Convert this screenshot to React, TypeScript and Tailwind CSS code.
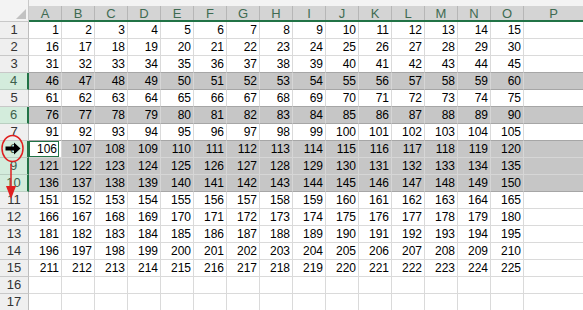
import React from 'react';

const COLS = 'ABCDEFGHIJKLMNO'.split('');
const ROWS = Array.from({ length: 17 }, (_, i) => i + 1);
const selected = new Set([4, 6, 8, 9, 10]);

const isSel = (r: number) => selected.has(r);

const Row = ({ r }: { r: number }) => {
  const sel = isSel(r);
  // dark line under a row when the selection block starts or ends there
  const darkBottom = (sel && !isSel(r + 1)) || (!sel && isSel(r + 1));
  const rowLine = darkBottom ? 'border-b-[#a6a6a6]' : sel ? 'border-b-[#d6d6d6]' : 'border-b-[#dadada]';
  const hasData = r <= 15;

  return (
    <div className="flex h-[17px]">
      <div
        className={`w-[29px] shrink-0 flex items-center justify-center border-b text-[13px] ${
          sel
            ? 'bg-[#d3ecdc] text-[#3d5f4c] border-r-2 border-r-[#217346] border-b-[#b9cfc1]'
            : 'bg-[#efefef] text-[#333] border-r border-r-[#bdbdbd] border-b-[#c8c8c8]'
        }`}
      >
        {r}
      </div>
      {COLS.map((c, i) => {
        const active = r === 8 && i === 0;
        const val = hasData ? (r - 1) * 15 + i + 1 : '';
        return (
          <div
            key={c}
            className={`w-[33px] shrink-0 border-r border-b flex items-center justify-end pr-[2px] ${rowLine} ${
              sel ? 'border-r-[#d6d6d6]' : 'border-r-[#dadada]'
            } ${active ? 'bg-white' : sel ? 'bg-[#c6c6c6]' : 'bg-white'}`}
          >
            {active ? (
              <div className="w-full h-full border border-[#217346] flex items-center justify-end pr-[1px]">{val}</div>
            ) : (
              val
            )}
          </div>
        );
      })}
      <div className={`flex-1 border-b ${rowLine} ${sel ? 'bg-[#c6c6c6]' : 'bg-white'}`} />
    </div>
  );
};

export default function App() {
  return (
    <div
      className="relative w-[583px] h-[310px] overflow-hidden bg-white text-[12px] text-black"
      style={{ fontFamily: '"Liberation Sans", Arial, sans-serif' }}
    >
      {/* column headers */}
      <div className="flex h-[22px] bg-[#f3f3f3]">
        <div className="w-[29px] shrink-0 relative border-r border-[#c8c8c8] border-b border-b-[#c8c8c8]">
          <svg className="absolute right-[2px] bottom-[2px]" width="10" height="10" viewBox="0 0 10 10">
            <polygon points="10,0 10,10 0,10" fill="#c2c2c2" />
          </svg>
        </div>
        <div className="flex flex-1 items-end">
          <div className="flex w-full h-[16px] border-b-2 border-[#217346]">
            {COLS.map((c) => (
              <div
                key={c}
                className="w-[33px] shrink-0 bg-[#d4d4d4] border-r border-[#b6b6b6] flex items-center justify-center text-[#3f6b52] text-[13px] leading-none"
              >
                {c}
              </div>
            ))}
            <div className="flex-1 bg-[#d4d4d4] flex items-center justify-center text-[#3f6b52] text-[13px] leading-none">
              P
            </div>
          </div>
        </div>
      </div>

      {ROWS.map((r) => (
        <Row key={r} r={r} />
      ))}

      {/* annotations */}
      <svg className="absolute left-0 top-0 pointer-events-none" width="40" height="210" viewBox="0 0 40 210">
        <ellipse cx="12.5" cy="148.5" rx="10.5" ry="13" fill="none" stroke="#e02020" strokeWidth="1.5" />
        <path d="M5.5 146.5 H14 V142.5 L20.5 148.5 L14 154.5 V150.5 H5.5 Z" fill="#000" />
        <line x1="11" y1="164" x2="11" y2="190" stroke="#e02020" strokeWidth="1.5" />
        <polygon points="6,186 16,186 11,199" fill="#e02020" />
      </svg>
    </div>
  );
}
